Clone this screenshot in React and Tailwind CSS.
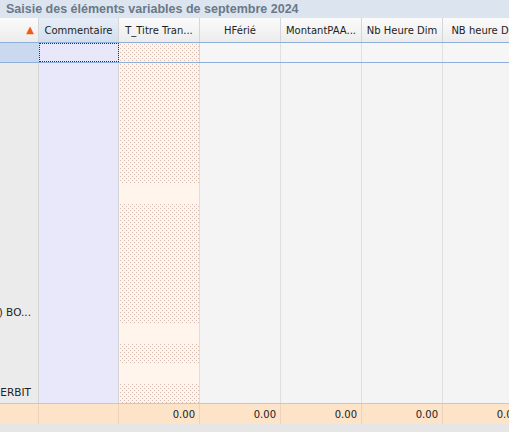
import React from "react";

const font = { fontFamily: "'DejaVu Sans', Tahoma, sans-serif" };

const columns = [
  { key: "nom", w: "w-[39px]", head: "", kind: "name" },
  { key: "commentaire", w: "w-[80px]", head: "Commentaire", kind: "comment" },
  { key: "titre", w: "w-[81px]", head: "T_Titre Tran...", kind: "titre" },
  { key: "hferie", w: "w-[81px]", head: "HFérié", kind: "plain" },
  { key: "paa", w: "w-[81px]", head: "MontantPAA...", kind: "plain" },
  { key: "dim", w: "w-[81px]", head: "Nb Heure Dim", kind: "plain" },
  { key: "di", w: "w-[81px]", head: "NB heure Di.", kind: "plain" },
];

// rows with a dotted "T_Titre" cell
const dotted = [0, 1, 2, 3, 4, 5, 7, 8, 9, 10, 11, 12, 14, 16];
const names = { 12: "DURAND (SAS) BO...", 16: "ROBERT HERBIT" };
const rows = Array.from({ length: 17 }, (_, i) => i);

const dots =
  "[background-image:radial-gradient(circle_at_0.5px_0.5px,#d6b9ae_0.7px,transparent_0.7px),radial-gradient(circle_at_0.5px_0.5px,#d6b9ae_0.7px,transparent_0.7px)] [background-size:4px_4px] [background-position:1px_1px,3px_3px]";

function bodyCell(col, i) {
  if (col.kind === "name")
    return (
      <div key={i} className="h-[20px] bg-[#ebebeb] flex items-center justify-end overflow-hidden whitespace-nowrap pr-[7px] text-[10.5px] text-[#222]">
        {names[i] || ""}
      </div>
    );
  if (col.kind === "comment")
    return <div key={i} className="h-[20px] bg-[#e8e8fa]" />;
  if (col.kind === "titre")
    return (
      <div key={i} className={`h-[20px] bg-[#fff5ec] ${dotted.includes(i) ? dots : ""}`} />
    );
  return <div key={i} className="h-[20px] bg-[#f4f4f4]" />;
}

export default function App() {
  return (
    <div className="w-[509px] h-[432px] overflow-hidden bg-[#e6e6e6] flex flex-col" style={font}>
      <div
        className="h-[18px] bg-[#dce5ef] flex items-center pl-[6px] text-[12.5px] font-bold text-[#6b7888] whitespace-nowrap"
        style={{ fontFamily: "'Liberation Sans', Arial, sans-serif" }}
      >
        Saisie des éléments variables de septembre 2024
      </div>

      {/* header */}
      <div className="flex h-[25px] border-b border-[#8eaedb] whitespace-nowrap">
        {columns.map((c) => (
          <div
            key={c.key}
            className={`${c.w} shrink-0 flex items-center overflow-hidden border-r border-[#d6d6d6] text-[10px] text-[#222] ${
              c.kind === "comment"
                ? "bg-gradient-to-b from-[#e8eef8] to-[#d3dff0] justify-center"
                : "bg-gradient-to-b from-[#fbfbfb] to-[#ececec] justify-center"
            } ${c.kind === "name" ? "justify-end pr-[4px]" : ""}`}
          >
            {c.kind === "name" ? (
              <span className="text-[#f05a14] text-[10px] leading-none">▲</span>
            ) : (
              c.head
            )}
          </div>
        ))}
      </div>

      {/* filter row */}
      <div className="flex h-[20px] border-b border-[#8eaedb]">
        {columns.map((c) => (
          <div
            key={c.key}
            className={`${c.w} shrink-0 border-r ${
              c.kind === "name"
                ? "bg-[#cad9ee] border-[#cad9ee]"
                : c.kind === "comment"
                ? "bg-[#e8e8fa] border-[#d6d6d6]"
                : c.kind === "titre"
                ? `bg-[#fff5ec] border-[#d6d6d6] ${dots}`
                : "bg-[#f6f6f6] border-[#e0e0e0]"
            }`}
          >
            {c.kind === "comment" && (
              <div className="h-full border border-dotted border-[#333] -mr-[1px]" />
            )}
          </div>
        ))}
      </div>

      {/* body */}
      <div className="flex border-b border-[#c8c8c8]">
        {columns.map((c) => (
          <div
            key={c.key}
            className={`${c.w} shrink-0 border-r ${
              c.kind === "name" || c.kind === "comment" ? "border-[#d4d4d4]" : "border-[#dedede]"
            }`}
          >
            {rows.map((i) => bodyCell(c, i))}
          </div>
        ))}
      </div>

      {/* totals */}
      <div className="flex h-[20px] bg-[#fde3c7]">
        {columns.map((c) => (
          <div
            key={c.key}
            className={`${c.w} shrink-0 border-r border-[#ecd4bb] flex items-center justify-end pr-[4px] text-[10px] text-[#222]`}
          >
            {c.kind === "titre" || c.kind === "plain" ? "0.00" : ""}
          </div>
        ))}
      </div>
    </div>
  );
}
